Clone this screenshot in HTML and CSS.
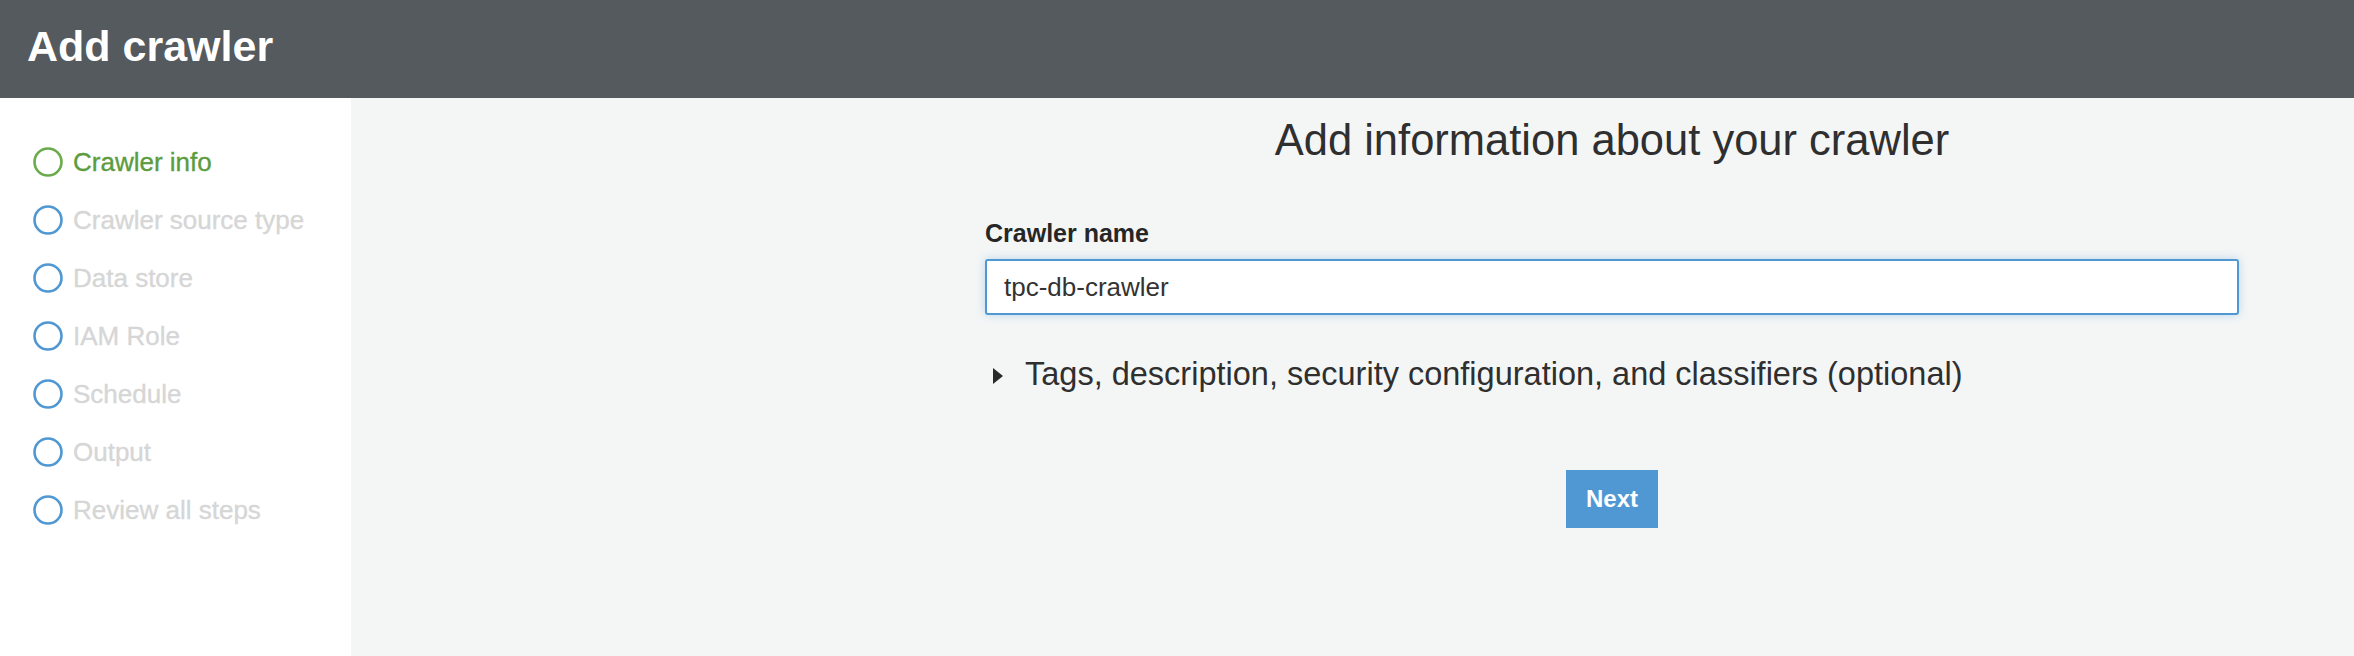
FILE: index.html
```html
<!DOCTYPE html>
<html lang="en">
<head>
<meta charset="utf-8">
<title>Add crawler</title>
<link rel="stylesheet" href="styles.css">
</head>
<body>
<div class="page">
  <header class="topbar">
    <h1 class="topbar-title">Add crawler</h1>
  </header>
  <div class="body-row">
    <nav class="steps">
      <div class="step step-active">
        <svg class="step-ring" width="30" height="30" viewBox="0 0 30 30"><circle cx="15" cy="15" r="13.5" fill="none" stroke="#6aab4b" stroke-width="2.6"/></svg>
        <span class="step-label">Crawler info</span>
      </div>
      <div class="step">
        <svg class="step-ring" width="30" height="30" viewBox="0 0 30 30"><circle cx="15" cy="15" r="13.5" fill="none" stroke="#4f98d3" stroke-width="2.6"/></svg>
        <span class="step-label">Crawler source type</span>
      </div>
      <div class="step">
        <svg class="step-ring" width="30" height="30" viewBox="0 0 30 30"><circle cx="15" cy="15" r="13.5" fill="none" stroke="#4f98d3" stroke-width="2.6"/></svg>
        <span class="step-label">Data store</span>
      </div>
      <div class="step">
        <svg class="step-ring" width="30" height="30" viewBox="0 0 30 30"><circle cx="15" cy="15" r="13.5" fill="none" stroke="#4f98d3" stroke-width="2.6"/></svg>
        <span class="step-label">IAM Role</span>
      </div>
      <div class="step">
        <svg class="step-ring" width="30" height="30" viewBox="0 0 30 30"><circle cx="15" cy="15" r="13.5" fill="none" stroke="#4f98d3" stroke-width="2.6"/></svg>
        <span class="step-label">Schedule</span>
      </div>
      <div class="step">
        <svg class="step-ring" width="30" height="30" viewBox="0 0 30 30"><circle cx="15" cy="15" r="13.5" fill="none" stroke="#4f98d3" stroke-width="2.6"/></svg>
        <span class="step-label">Output</span>
      </div>
      <div class="step">
        <svg class="step-ring" width="30" height="30" viewBox="0 0 30 30"><circle cx="15" cy="15" r="13.5" fill="none" stroke="#4f98d3" stroke-width="2.6"/></svg>
        <span class="step-label">Review all steps</span>
      </div>
    </nav>
    <main class="content">
      <div class="form-col">
        <h2 class="form-title">Add information about your crawler</h2>
        <label class="field-label" for="crawler-name">Crawler name</label>
        <input id="crawler-name" class="field-input" type="text" value="tpc-db-crawler">
        <div class="expander">
          <span class="caret"></span>
          <span class="expander-text">Tags, description, security configuration, and classifiers (optional)</span>
        </div>
        <div class="actions">
          <button class="btn-next" type="button">Next</button>
        </div>
      </div>
    </main>
  </div>
</div>
</body>
</html>
```

FILE: styles.css
```css
* { box-sizing: border-box; }

html, body {
  margin: 0;
  padding: 0;
}

body {
  font-family: "Liberation Sans", Arial, Helvetica, sans-serif;
  background: #f4f6f6;
  color: #333;
}

.page {
  display: flex;
  flex-direction: column;
  min-height: 656px;
}

.topbar {
  height: 98px;
  background: #545a5e;
  display: flex;
  align-items: center;
  padding: 0 0 7px 27px;
  flex: none;
}

.topbar-title {
  margin: 0;
  font-size: 43px;
  font-weight: bold;
  color: #ffffff;
  line-height: 50px;
}

.body-row {
  flex: 1;
  display: flex;
}

.steps {
  width: 351px;
  flex: none;
  background: #ffffff;
  padding: 34.5px 0 0 33px;
  display: flex;
  flex-direction: column;
}

.step {
  height: 58px;
  display: flex;
  align-items: center;
  gap: 10px;
}

.step-ring {
  flex: none;
  display: block;
}

.step-label {
  font-size: 26px;
  line-height: 58px;
  color: #d6d6d6;
  -webkit-text-stroke: 0.35px currentColor;
}

.step-active .step-label {
  color: #5b9c3e;
}

.content {
  flex: 1;
  padding-left: 634px;
  padding-right: 115px;
}

.form-col {
  width: 1254px;
  display: flex;
  flex-direction: column;
}

.form-title {
  margin: 17px 0 0 0;
  font-size: 43.5px;
  font-weight: normal;
  line-height: 50px;
  text-align: center;
  color: #2f2f2f;
}

.field-label {
  margin-top: 53px;
  font-size: 25px;
  font-weight: bold;
  line-height: 30px;
  color: #262626;
}

.field-input {
  margin-top: 11px;
  height: 56px;
  width: 100%;
  border: 2px solid #4f98d3;
  border-radius: 3px;
  background: #ffffff;
  padding: 0 17px;
  font-family: "Liberation Sans", Arial, Helvetica, sans-serif;
  font-size: 26px;
  color: #333;
  box-shadow: 0 0 10px rgba(79, 152, 211, 0.35);
  outline: none;
}

.expander {
  margin-top: 39px;
  display: flex;
  align-items: flex-start;
  padding-left: 8px;
}

.caret {
  flex: none;
  width: 0;
  height: 0;
  margin-top: 14px;
  border-left: 10px solid #2a2a2a;
  border-top: 8px solid transparent;
  border-bottom: 8px solid transparent;
}

.expander-text {
  margin-left: 22px;
  font-size: 32.5px;
  line-height: 40px;
  color: #2f2f2f;
}

.actions {
  margin-top: 76px;
  display: flex;
  justify-content: center;
}

.btn-next {
  width: 92px;
  height: 58px;
  border: none;
  border-radius: 0;
  background: #4f98d3;
  color: #ffffff;
  font-family: "Liberation Sans", Arial, Helvetica, sans-serif;
  font-size: 24px;
  font-weight: bold;
  padding: 0;
  display: flex;
  align-items: center;
  justify-content: center;
}
```
